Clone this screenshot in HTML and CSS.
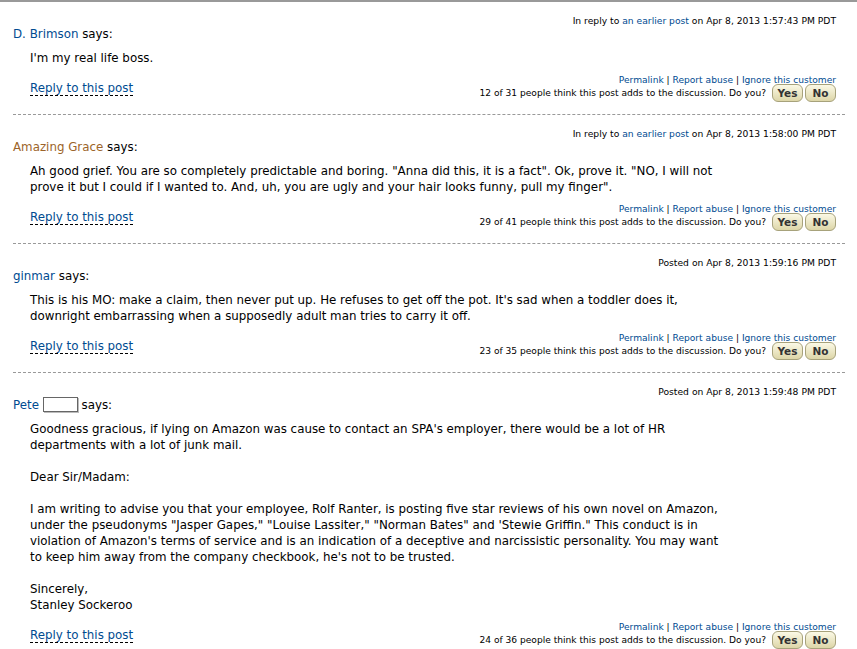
FILE: index.html
```html
<!doctype html>
<html lang="en">
  <head>
    <meta charset="utf-8" />
    <title>Discussion thread</title>
    <link rel="stylesheet" href="styles.css">
  </head>
  <body>
    <div class="thread">

      <div class="post">
        <div class="post-meta">In reply to <a href="#">an earlier post</a> on Apr 8, 2013 1:57:43 PM PDT</div>
        <div class="post-author"><a href="#">D. Brimson</a> says:</div>
        <div class="post-body">
          <p>I'm my real life boss.</p>
        </div>
        <div class="post-foot">
          <a class="reply" href="#">Reply to this post</a>
          <div class="post-tools">
            <div class="post-links"><a href="#">Permalink</a> | <a href="#">Report abuse</a> | <a href="#">Ignore this customer</a></div>
            <div class="post-vote">
              12 of 31 people think this post adds to the discussion. Do you?
              <button type="button" class="vote-btn">Yes</button>
              <button type="button" class="vote-btn">No</button>
            </div>
          </div>
        </div>
      </div>

      <div class="post">
        <div class="post-meta">In reply to <a href="#">an earlier post</a> on Apr 8, 2013 1:58:00 PM PDT</div>
        <div class="post-author"><a href="#" class="author-badge">Amazing Grace</a> says:</div>
        <div class="post-body">
          <p>Ah good grief. You are so completely predictable and boring. "Anna did this, it is a fact". Ok, prove it. "NO, I will not<br>
          prove it but I could if I wanted to. And, uh, you are ugly and your hair looks funny, pull my finger".</p>
        </div>
        <div class="post-foot">
          <a class="reply" href="#">Reply to this post</a>
          <div class="post-tools">
            <div class="post-links"><a href="#">Permalink</a> | <a href="#">Report abuse</a> | <a href="#">Ignore this customer</a></div>
            <div class="post-vote">
              29 of 41 people think this post adds to the discussion. Do you?
              <button type="button" class="vote-btn">Yes</button>
              <button type="button" class="vote-btn">No</button>
            </div>
          </div>
        </div>
      </div>

      <div class="post">
        <div class="post-meta">Posted on Apr 8, 2013 1:59:16 PM PDT</div>
        <div class="post-author"><a href="#">ginmar</a> says:</div>
        <div class="post-body">
          <p>This is his MO: make a claim, then never put up. He refuses to get off the pot. It's sad when a toddler does it,<br>
          downright embarrassing when a supposedly adult man tries to carry it off.</p>
        </div>
        <div class="post-foot">
          <a class="reply" href="#">Reply to this post</a>
          <div class="post-tools">
            <div class="post-links"><a href="#">Permalink</a> | <a href="#">Report abuse</a> | <a href="#">Ignore this customer</a></div>
            <div class="post-vote">
              23 of 35 people think this post adds to the discussion. Do you?
              <button type="button" class="vote-btn">Yes</button>
              <button type="button" class="vote-btn">No</button>
            </div>
          </div>
        </div>
      </div>

      <div class="post">
        <div class="post-meta">Posted on Apr 8, 2013 1:59:48 PM PDT</div>
        <div class="post-author"><a href="#">Pete</a> <span class="blank-box"></span> says:</div>
        <div class="post-body">
          <p>Goodness gracious, if lying on Amazon was cause to contact an SPA's employer, there would be a lot of HR<br>
          departments with a lot of junk mail.</p>
          <p>Dear Sir/Madam:</p>
          <p>I am writing to advise you that your employee, Rolf Ranter, is posting five star reviews of his own novel on Amazon,<br>
          under the pseudonyms "Jasper Gapes," "Louise Lassiter," "Norman Bates" and 'Stewie Griffin." This conduct is in<br>
          violation of Amazon's terms of service and is an indication of a deceptive and narcissistic personality. You may want<br>
          to keep him away from the company checkbook, he's not to be trusted.</p>
          <p>Sincerely,<br>
          Stanley Sockeroo</p>
        </div>
        <div class="post-foot">
          <a class="reply" href="#">Reply to this post</a>
          <div class="post-tools">
            <div class="post-links"><a href="#">Permalink</a> | <a href="#">Report abuse</a> | <a href="#">Ignore this customer</a></div>
            <div class="post-vote">
              24 of 36 people think this post adds to the discussion. Do you?
              <button type="button" class="vote-btn">Yes</button>
              <button type="button" class="vote-btn">No</button>
            </div>
          </div>
        </div>
      </div>

    </div>
  </body>
</html>
```

FILE: styles.css
```css
html {
  background: #fff;
}

body {
  margin: 0;
  border-top: 2px solid #999;
  font: 11.85px/16px "DejaVu Sans", Verdana, sans-serif;
  color: #000;
}

a {
  color: #004b91;
  text-decoration: none;
}

.thread {
  padding: 0 12px 0 13px;
}

.post {
  padding: 13px 9px 12px 0;
  border-bottom: 1px dashed #999;
}

.post-meta {
  text-align: right;
  font-size: 9.2px;
  line-height: 11px;
}

.post-author .author-badge {
  color: #9c6429;
}

.blank-box {
  display: inline-block;
  width: 33px;
  height: 13px;
  vertical-align: -3px;
  border: 1px solid #666;
  box-shadow: 1px 1px 0 #bbb;
  background: #fff;
}

.post-body {
  margin-top: 8px;
  padding-left: 17px;
}

.post-body p {
  margin: 0;
}

.post-body p + p {
  margin-top: 16px;
}

.post-foot {
  display: flex;
  justify-content: space-between;
  align-items: flex-start;
  margin-top: 9px;
  padding-left: 17px;
}

.reply {
  display: inline-block;
  margin-top: 6px;
  line-height: 14px;
  border-bottom: 1px dashed #000;
}

.post-tools {
  text-align: right;
  font-size: 9.1px;
}

.post-links {
  line-height: 10px;
}

.post-vote {
  display: flex;
  align-items: center;
  justify-content: flex-end;
  gap: 2px;
  height: 18px;
  margin-top: -1px;
}

.post-vote .vote-btn:first-of-type {
  margin-left: 4px;
}

.vote-btn {
  height: 18px;
  min-width: 31px;
  padding: 0 4px;
  border: 1px solid #a7a27b;
  border-radius: 6px;
  background: linear-gradient(#fbf9e6, #ddd6a8);
  font: bold 10.5px "DejaVu Sans", Verdana, sans-serif;
  color: #333;
}
```
